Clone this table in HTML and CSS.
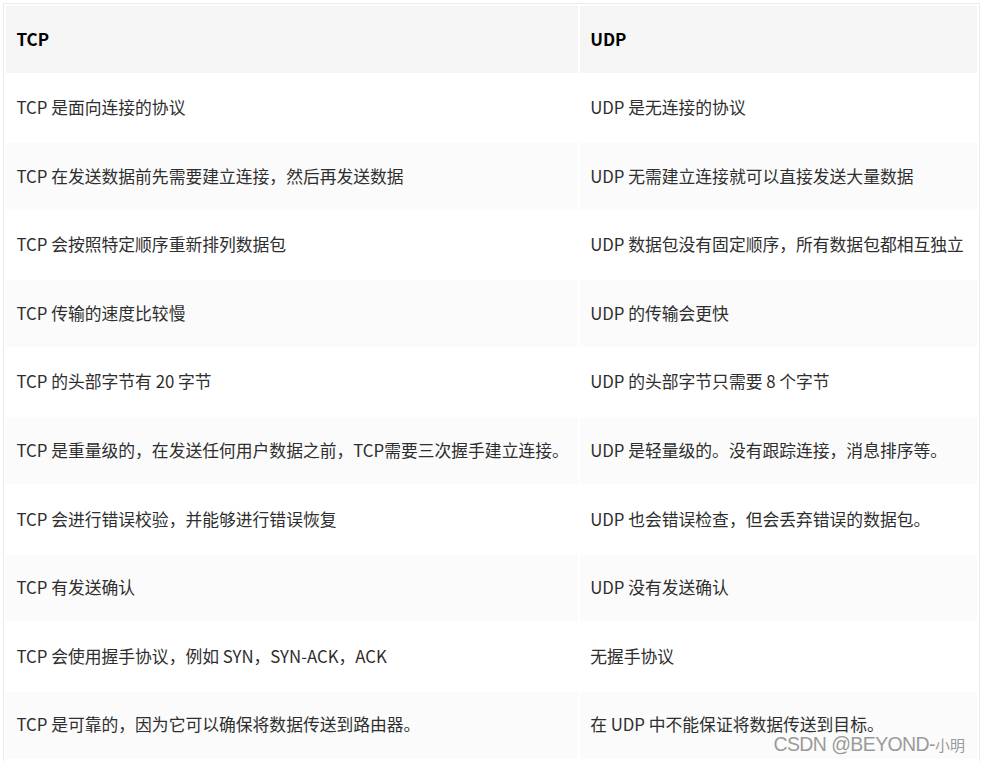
FILE: index.html
```html
<!DOCTYPE html>
<html lang="zh-CN">
<head>
<meta charset="utf-8">
<title>TCP vs UDP</title>
<link rel="stylesheet" href="styles.css">
</head>
<body>
<div class="wrap">
  <table class="cmp">
    <colgroup><col class="c1"><col class="c2"></colgroup>
    <thead>
      <tr><th>TCP</th><th>UDP</th></tr>
    </thead>
    <tbody>
      <tr><td>TCP 是面向连接的协议</td><td>UDP 是无连接的协议</td></tr>
      <tr><td>TCP 在发送数据前先需要建立连接，然后再发送数据</td><td>UDP 无需建立连接就可以直接发送大量数据</td></tr>
      <tr><td>TCP 会按照特定顺序重新排列数据包</td><td>UDP 数据包没有固定顺序，所有数据包都相互独立</td></tr>
      <tr><td>TCP 传输的速度比较慢</td><td>UDP 的传输会更快</td></tr>
      <tr><td>TCP 的头部字节有 20 字节</td><td>UDP 的头部字节只需要 8 个字节</td></tr>
      <tr><td>TCP 是重量级的，在发送任何用户数据之前，TCP需要三次握手建立连接。</td><td>UDP 是轻量级的。没有跟踪连接，消息排序等。</td></tr>
      <tr><td>TCP 会进行错误校验，并能够进行错误恢复</td><td>UDP 也会错误检查，但会丢弃错误的数据包。</td></tr>
      <tr><td>TCP 有发送确认</td><td>UDP 没有发送确认</td></tr>
      <tr><td>TCP 会使用握手协议，例如 SYN，SYN-ACK，ACK</td><td>无握手协议</td></tr>
      <tr><td>TCP 是可靠的，因为它可以确保将数据传送到路由器。</td><td>在 UDP 中不能保证将数据传送到目标。</td></tr>
    </tbody>
  </table>
</div>
<div class="mark"><span class="mark-latin">CSDN @BEYOND-</span><span class="mark-cjk">小明</span></div>
</body>
</html>
```

FILE: styles.css
```css
html, body {
  margin: 0;
  padding: 0;
  background: #ffffff;
}

body {
  font-family: "Noto Sans CJK SC", "Noto Sans", sans-serif;
  color: #2e2e2e;
  overflow: hidden;
}

.wrap {
  margin: 3px 0 0 3px;
  width: 975px;
  border: 1px solid #ececec;
  border-bottom: none;
}

.cmp {
  width: 100%;
  table-layout: fixed;
  border-collapse: separate;
  border-spacing: 2.9px;
  font-size: 16.8px;
}

.c1 { width: 571.7px; }

.cmp th,
.cmp td {
  height: 66.6px;
  padding: 0 10.5px;
  text-align: left;
  vertical-align: middle;
  white-space: nowrap;
  line-height: 1.3;
}

.cmp th {
  background: #f5f5f5;
  color: #000000;
  font-weight: 700;
  font-size: 17px;
}

.cmp tbody tr:nth-child(odd) td { background: #ffffff; }
.cmp tbody tr:nth-child(even) td { background: #fbfbfb; }

.mark {
  position: absolute;
  right: 16px;
  bottom: 8px;
  color: #9a9a9a;
  text-shadow: 0 0 1px #ffffff;
  white-space: nowrap;
  line-height: 1;
}

.mark-latin {
  font-family: "Liberation Sans", Arial, sans-serif;
  font-size: 19.5px;
  letter-spacing: -0.6px;
}

.mark-cjk {
  font-family: "Noto Sans CJK SC", sans-serif;
  font-size: 15px;
}
```
